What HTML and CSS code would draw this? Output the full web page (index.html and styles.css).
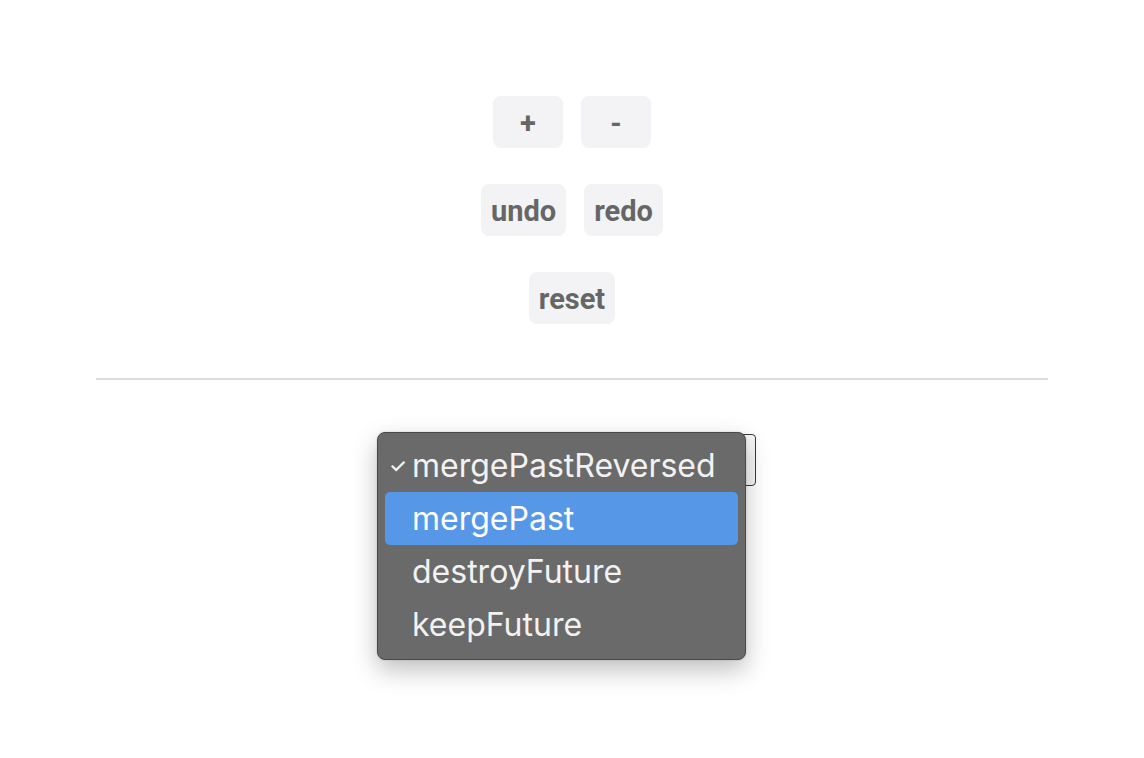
FILE: index.html
```html
<!DOCTYPE html>
<html>
<head>
<meta charset="utf-8">
<link rel="stylesheet" href="styles.css">
</head>
<body>
<main class="app">
  <div class="controls">
    <div class="row">
      <button class="btn">+</button>
      <button class="btn">-</button>
    </div>
    <div class="row">
      <button class="btn">undo</button>
      <button class="btn">redo</button>
    </div>
    <div class="row">
      <button class="btn">reset</button>
    </div>
  </div>
  <hr class="divider">
  <div class="select-area">
    <div class="select-wrap">
      <div class="select-box"></div>
      <ul class="menu">
        <li class="item"><span class="check">✓</span>mergePastReversed</li>
        <li class="item active">mergePast</li>
        <li class="item">destroyFuture</li>
        <li class="item">keepFuture</li>
      </ul>
    </div>
  </div>
</main>
</body>
</html>
```
FILE: styles.css
```css
html, body {
  margin: 0;
  padding: 0;
  background: #ffffff;
  min-height: 758px;
}
.app {
  padding: 96px 96px 0 96px;
  min-height: 662px;
}
.controls {
  display: flex;
  flex-direction: column;
  align-items: center;
  gap: 36px;
}
.row {
  display: flex;
  gap: 18px;
  justify-content: center;
}
.btn {
  font-family: Roboto, "Liberation Sans", sans-serif;
  font-weight: 700;
  font-size: 29px;
  color: #666666;
  background: #f3f3f5;
  border: none;
  border-radius: 8px;
  height: 52px;
  min-width: 70px;
  padding: 3px 10px 0 10px;
  line-height: 49px;
}
.divider {
  border: none;
  height: 2px;
  background: #dcdce0;
  margin: 54px 0 0 0;
}
.select-area {
  display: flex;
  justify-content: center;
  padding-top: 54px;
}
.select-wrap {
  position: relative;
  width: 366px;
  height: 52px;
  left: 1px;
}
.select-box {
  width: 100%;
  height: 100%;
  box-sizing: border-box;
  border: 1.5px solid #3a3a3a;
  border-radius: 4px;
  background: #f6f6f6;
}
.menu {
  position: absolute;
  left: -13px;
  top: -2px;
  width: 369px;
  box-sizing: border-box;
  margin: 0;
  padding: 6px 7px 8px 7px;
  list-style: none;
  background: #6a6a6a;
  border: 1px solid #4a4a4a;
  border-radius: 8px;
  box-shadow: 0 10px 24px rgba(0,0,0,0.25), 0 0 2px rgba(0,0,0,0.2);
  z-index: 2;
}
.item {
  position: relative;
  height: 53px;
  line-height: 53px;
  padding-left: 27px;
  font-family: Inter, "Noto Sans", sans-serif;
  font-size: 32px;
  color: #f2f2f2;
  border-radius: 5px;
  white-space: nowrap;
}
.item.active {
  background: #5697e8;
  color: #ffffff;
}
.check {
  position: absolute;
  left: 4px;
  top: 1px;
  font-size: 20px;
  font-weight: 500;
}
```
